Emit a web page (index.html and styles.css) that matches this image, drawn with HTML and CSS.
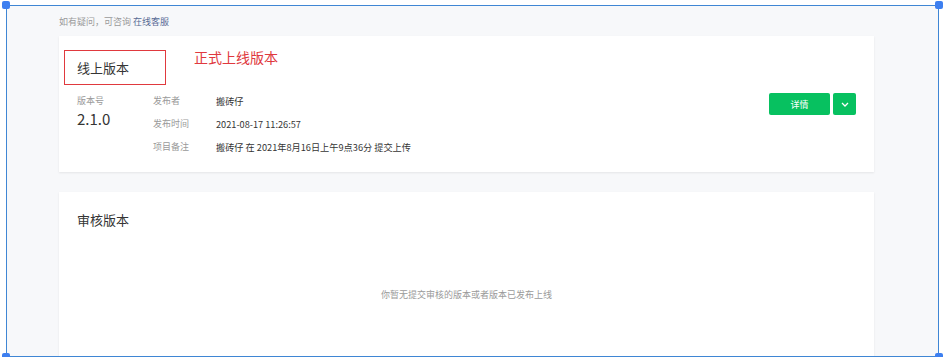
FILE: index.html
```html
<!DOCTYPE html>
<html lang="zh-CN">
<head>
  <meta charset="UTF-8" />
  <meta name="viewport" content="width=device-width, initial-scale=1.0" />
  <title>版本管理</title>
  <link rel="stylesheet" href="styles.css">
</head>
<body>
  <div class="frame">
    <span class="handle tl"></span>
    <span class="handle tr"></span>
    <span class="handle bl"></span>
    <span class="handle br"></span>

    <div class="page">
      <p class="tip">如有疑问，可咨询 <a class="link">在线客服</a></p>

      <div class="card online">
        <div class="head">
          <div class="mark">
            <h3 class="title">线上版本</h3>
          </div>
          <span class="note">正式上线版本</span>
        </div>

        <div class="info">
          <div class="ver">
            <div class="label">版本号</div>
            <div class="num">2.1.0</div>
          </div>
          <ul class="meta">
            <li><span class="label">发布者</span><span class="val">搬砖仔</span></li>
            <li><span class="label">发布时间</span><span class="val">2021-08-17 11:26:57</span></li>
            <li><span class="label">项目备注</span><span class="val">搬砖仔 在 2021年8月16日上午9点36分 提交上传</span></li>
          </ul>
          <div class="ops">
            <button class="btn">详情</button>
            <button class="btn drop">
              <svg width="8" height="5" viewBox="0 0 8 5"><path d="M1 1l3 3 3-3" fill="none" stroke="#fff" stroke-width="1.3"/></svg>
            </button>
          </div>
        </div>
      </div>

      <div class="card review">
        <h3 class="title">审核版本</h3>
        <p class="empty">你暂无提交审核的版本或者版本已发布上线</p>
      </div>
    </div>
  </div>
</body>
</html>
```

FILE: styles.css
```css
* {
  box-sizing: border-box;
}

body {
  margin: 0;
  background: #fff;
  font-family: "Noto Sans CJK SC", "Noto Sans", sans-serif;
  color: #353535;
}

.frame {
  position: relative;
  margin: 5px 0 0 6px;
  width: 933px;
  height: 352px;
  border: 1.5px solid #3f86d4;
  background: #f7f8fa;
}

.handle {
  position: absolute;
  width: 8px;
  height: 8px;
  border-radius: 2px;
  background: #3d7ff0;
  z-index: 2;
}
.tl { left: -5px; top: -5px; }
.tr { right: -5px; top: -5px; }
.bl { left: -5px; bottom: -5px; }
.br { right: -5px; bottom: -5px; }

.page {
  height: 100%;
  overflow: hidden;
  padding: 8px 64px 0 52px;
}

.tip {
  margin: 0 0 6px;
  font-size: 9px;
  line-height: 16px;
  color: #9a9a9a;
}

.link {
  color: #576b95;
}

.card {
  background: #fff;
  box-shadow: 0 1px 2px rgba(0, 0, 0, 0.08);
}

.online {
  height: 136px;
  padding: 14px 18px 0 5px;
}

.head {
  display: flex;
  align-items: flex-start;
}

.mark {
  width: 102px;
  height: 35px;
  border: 1.5px solid #e0393e;
  padding-left: 12px;
  display: flex;
  align-items: center;
}

.title {
  margin: 0;
  font-size: 13px;
  font-weight: normal;
  color: #353535;
}

.note {
  margin: -1px 0 0 28px;
  font-size: 14px;
  line-height: 16px;
  color: #e0393e;
}

.info {
  display: flex;
  margin-top: 4px;
  padding-left: 13px;
}

.label {
  font-size: 9px;
  color: #9a9a9a;
}

.ver {
  width: 76px;
}

.ver .label {
  line-height: 23px;
}

.num {
  font-size: 15px;
  line-height: 20px;
  margin-top: -3px;
}

.meta {
  list-style: none;
  margin: 0;
  padding: 0;
  flex: 1;
}

.meta li {
  display: flex;
  align-items: center;
  height: 23px;
}

.meta .label {
  width: 63px;
}

.val {
  font-size: 9.2px;
}

.ops {
  display: flex;
  gap: 3px;
  margin-top: 4px;
}

.btn {
  height: 22px;
  border: none;
  border-radius: 2px;
  background: #07c160;
  color: #fff;
  font-family: inherit;
  font-size: 9px;
  width: 61px;
  cursor: pointer;
  padding: 0;
}

.btn.drop {
  width: 23px;
  display: flex;
  align-items: center;
  justify-content: center;
}

.review {
  margin-top: 20px;
  height: 200px;
  padding: 18px 18px 0 18px;
}

.empty {
  margin: 59px 0 0;
  text-align: center;
  font-size: 9px;
  color: #9a9a9a;
}
```
